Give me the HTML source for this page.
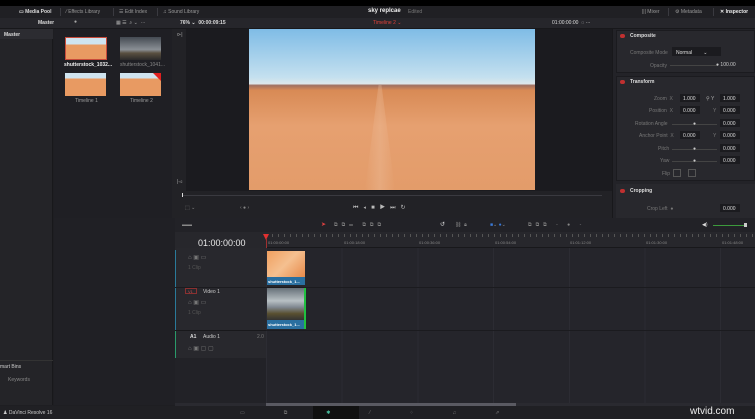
<!DOCTYPE html>
<html><head><style>
*{margin:0;padding:0;box-sizing:border-box}
body{width:755px;height:419px;overflow:hidden;background:#1e1e22;font-family:"Liberation Sans",sans-serif;color:#c8c8cc;position:relative;font-size:5px}
.a{position:absolute}
.t{position:absolute;white-space:nowrap}
.sep{position:absolute;width:1px;background:#3a3a40}
</style></head><body>
<div class="a" style="left:0;top:0;width:755px;height:6px;background:#000"></div>
<div class="a" style="left:0;top:6px;width:755px;height:12px;background:#202024"></div>
<div class="t" style="left:19px;top:9px;color:#ddd;font-weight:bold">▭ Media Pool</div>
<div class="sep" style="left:60px;top:8px;height:8px"></div>
<div class="t" style="left:66px;top:9px;color:#999">⁄ Effects Library</div>
<div class="sep" style="left:113px;top:8px;height:8px"></div>
<div class="t" style="left:119px;top:9px;color:#999">☰ Edit Index</div>
<div class="sep" style="left:157px;top:8px;height:8px"></div>
<div class="t" style="left:163px;top:9px;color:#999">♫ Sound Library</div>
<div class="t" style="left:368px;top:8px;color:#eee;font-weight:bold;font-size:6px">sky replcae</div>
<div class="t" style="left:408px;top:9px;color:#777">Edited</div>
<div class="t" style="left:642px;top:9px;color:#999">||| Mixer</div>
<div class="sep" style="left:668px;top:8px;height:8px"></div>
<div class="t" style="left:675px;top:9px;color:#999">⚙ Metadata</div>
<div class="sep" style="left:713px;top:8px;height:8px"></div>
<div class="t" style="left:720px;top:9px;color:#eee;font-weight:bold">✕ Inspector</div>
<div class="a" style="left:0;top:18px;width:755px;height:11px;background:#26262b;border-bottom:1px solid #18181b"></div>
<div class="t" style="left:38px;top:20px;color:#ddd;font-weight:bold">Master</div>
<div class="t" style="left:74px;top:19px;color:#aaa">●</div>
<div class="t" style="left:116px;top:20px;color:#aaa">▦ ☰ &nbsp;⌕ ⌄ &nbsp;···</div>
<div class="t" style="left:180px;top:20px;color:#ddd;font-weight:bold">76% ⌄ &nbsp;00:00:09:15</div>
<div class="t" style="left:373px;top:20px;color:#e0403a">Timeline 2 ⌄</div>
<div class="t" style="left:552px;top:20px;color:#ddd">01:00:00:00 &nbsp;◌ ···</div>
<div class="a" style="left:0;top:29px;width:53px;height:376px;background:#242428;border-right:1px solid #18181b"></div>
<div class="a" style="left:0;top:29px;width:53px;height:10px;background:#2c2c31"></div>
<div class="t" style="left:4px;top:32px;color:#ddd;font-weight:bold">Master</div>
<div class="a" style="left:0;top:360px;width:53px;height:1px;background:#333"></div>
<div class="t" style="left:0;top:364px;color:#ccc">mart Bins</div>
<div class="t" style="left:8px;top:377px;color:#888">Keywords</div>
<div class="a" style="left:54px;top:29px;width:118px;height:189px;background:#1f1f24"></div>
<div class="a" style="left:54px;top:218px;width:121px;height:187px;background:#202025"></div>
<div class="a" style="left:65px;top:37px;width:42px;height:23px;background:linear-gradient(#cfe4f0 0 30%,#e89a62 30%);border:1px solid #c84a3a"></div>
<div class="t" style="left:64px;top:62px;color:#eee;font-weight:bold">shutterstock_1032...</div>
<div class="a" style="left:120px;top:37px;width:41px;height:23px;background:linear-gradient(#444a52,#8a8f95 55%,#5a5040 70%,#2a2a2a)"></div>
<div class="t" style="left:120px;top:62px;color:#888">shutterstock_1041...</div>
<div class="a" style="left:65px;top:73px;width:41px;height:23px;background:linear-gradient(#cfe4f0 0 25%,#e89a62 25%)"></div>
<div class="t" style="left:75px;top:98px;color:#999">Timeline 1</div>
<div class="a" style="left:120px;top:73px;width:41px;height:23px;background:linear-gradient(#cfe4f0 0 25%,#e89a62 25%)"></div>
<div class="a" style="left:153px;top:73px;width:0;height:0;border-left:8px solid transparent;border-top:8px solid #e02020"></div>
<div class="t" style="left:130px;top:98px;color:#999">Timeline 2</div>
<div class="a" style="left:172px;top:29px;width:440px;height:189px;background:#1b1b1f"></div>
<div class="a" style="left:172px;top:29px;width:14px;height:162px;background:#222226"></div>
<div class="t" style="left:177px;top:32px;color:#aaa">⊳|</div>
<div class="t" style="left:177px;top:179px;color:#aaa">|◅</div>
<div class="a" style="left:249px;top:29px;width:286px;height:161px;background:linear-gradient(#7fbce6 0%,#c4e0ef 30%,#dde7ea 34%,#a07060 35%,#d88a55 38%,#e6a070 60%,#e39c6a 100%)"></div>
<div class="a" style="left:365px;top:85px;width:30px;height:105px;background:linear-gradient(90deg,transparent,rgba(240,200,170,.3),transparent);clip-path:polygon(45% 0,55% 0,100% 100%,0 100%)"></div>
<div class="a" style="left:172px;top:191px;width:440px;height:27px;background:#222226"></div>
<div class="a" style="left:182px;top:195px;width:420px;height:1px;background:#3a3a40"></div>
<div class="a" style="left:182px;top:193px;width:1px;height:4px;background:#ddd"></div>
<div class="t" style="left:185px;top:205px;color:#888">⬚ ⌄</div>
<div class="t" style="left:240px;top:205px;color:#888">‹ ● ›</div>
<div class="t" style="left:353px;top:204px;color:#bbb;font-size:6px;letter-spacing:5px">⏮◂■▶⏭↻</div>
<div class="a" style="left:612px;top:29px;width:143px;height:189px;background:#232328;border-left:1px solid #18181b"></div>
<div class="a" style="left:616px;top:30px;width:139px;height:43px;background:#28282d;border:1px solid #1b1b1f"></div>
<div class="a" style="left:616px;top:76px;width:139px;height:105px;background:#28282d;border:1px solid #1b1b1f"></div>
<div class="a" style="left:616px;top:184px;width:139px;height:34px;background:#28282d"></div>
<div class="a" style="left:620px;top:34px;width:5px;height:4px;border-radius:2px;background:#c03030"></div>
<div class="t" style="left:630px;top:33px;color:#ddd;font-weight:bold">Composite</div>
<div class="t" style="left:630px;top:50px;color:#777">Composite Mode</div>
<div class="a" style="left:672px;top:47px;width:49px;height:9px;background:#1b1b1f"></div>
<div class="t" style="left:676px;top:50px;color:#ddd">Normal &nbsp;&nbsp;&nbsp;&nbsp;&nbsp;&nbsp;&nbsp;⌄</div>
<div class="t" style="left:650px;top:63px;color:#777">Opacity</div>
<div class="a" style="left:670px;top:65px;width:48px;height:1px;background:#444"></div>
<div class="t" style="left:716px;top:62px;color:#ccc">● 100.00</div>
<div class="a" style="left:620px;top:80px;width:5px;height:4px;border-radius:2px;background:#c03030"></div>
<div class="t" style="left:630px;top:79px;color:#ddd;font-weight:bold">Transform</div>
<div class="t" style="left:654px;top:96px;color:#777">Zoom &nbsp;X</div>
<div class="a" style="left:680px;top:94px;width:20px;height:8px;background:#1b1b1f"></div><div class="t" style="left:683px;top:96px;color:#ddd">1.000</div>
<div class="t" style="left:706px;top:96px;color:#aaa">⚲ Y</div>
<div class="a" style="left:720px;top:94px;width:20px;height:8px;background:#1b1b1f"></div><div class="t" style="left:723px;top:96px;color:#ddd">1.000</div>
<div class="t" style="left:649px;top:108px;color:#777">Position &nbsp;X</div>
<div class="a" style="left:680px;top:106px;width:20px;height:8px;background:#1b1b1f"></div><div class="t" style="left:683px;top:108px;color:#ddd">0.000</div>
<div class="t" style="left:713px;top:108px;color:#777">Y</div>
<div class="a" style="left:720px;top:106px;width:20px;height:8px;background:#1b1b1f"></div><div class="t" style="left:723px;top:108px;color:#ddd">0.000</div>
<div class="t" style="left:635px;top:121px;color:#777">Rotation Angle</div>
<div class="a" style="left:672px;top:124px;width:45px;height:1px;background:#444"></div><div class="t" style="left:693px;top:121px;color:#ccc">●</div>
<div class="a" style="left:720px;top:119px;width:20px;height:8px;background:#1b1b1f"></div><div class="t" style="left:723px;top:121px;color:#ddd">0.000</div>
<div class="t" style="left:639px;top:133px;color:#777">Anchor Point &nbsp;X</div>
<div class="a" style="left:680px;top:131px;width:20px;height:8px;background:#1b1b1f"></div><div class="t" style="left:683px;top:133px;color:#ddd">0.000</div>
<div class="t" style="left:713px;top:133px;color:#777">Y</div>
<div class="a" style="left:720px;top:131px;width:20px;height:8px;background:#1b1b1f"></div><div class="t" style="left:723px;top:133px;color:#ddd">0.000</div>
<div class="t" style="left:658px;top:146px;color:#777">Pitch</div>
<div class="a" style="left:672px;top:149px;width:45px;height:1px;background:#444"></div><div class="t" style="left:693px;top:146px;color:#ccc">●</div>
<div class="a" style="left:720px;top:144px;width:20px;height:8px;background:#1b1b1f"></div><div class="t" style="left:723px;top:146px;color:#ddd">0.000</div>
<div class="t" style="left:660px;top:158px;color:#777">Yaw</div>
<div class="a" style="left:672px;top:161px;width:45px;height:1px;background:#444"></div><div class="t" style="left:693px;top:158px;color:#ccc">●</div>
<div class="a" style="left:720px;top:156px;width:20px;height:8px;background:#1b1b1f"></div><div class="t" style="left:723px;top:158px;color:#ddd">0.000</div>
<div class="t" style="left:662px;top:171px;color:#777">Flip</div>
<div class="a" style="left:673px;top:169px;width:8px;height:8px;border:1px solid #555"></div>
<div class="a" style="left:688px;top:169px;width:8px;height:8px;border:1px solid #555"></div>
<div class="a" style="left:620px;top:189px;width:5px;height:4px;border-radius:2px;background:#c03030"></div>
<div class="t" style="left:630px;top:188px;color:#ddd;font-weight:bold">Cropping</div>
<div class="t" style="left:647px;top:206px;color:#777">Crop Left &nbsp;●</div>
<div class="a" style="left:720px;top:204px;width:20px;height:8px;background:#1b1b1f"></div><div class="t" style="left:723px;top:206px;color:#ddd">0.000</div>
<div class="a" style="left:175px;top:218px;width:580px;height:14px;background:#222227"></div>
<div class="t" style="left:182px;top:222px;color:#888">▬▬</div>
<div class="t" style="left:321px;top:221px;color:#e04040;font-size:6px">➤</div>
<div class="t" style="left:334px;top:222px;color:#888;letter-spacing:4px">⧉⧉▭ ⧉⧉⧉</div>
<div class="t" style="left:440px;top:221px;color:#ddd;font-size:6px">↺</div>
<div class="t" style="left:455px;top:222px;color:#888">⛓ &nbsp;🔒︎</div>
<div class="t" style="left:490px;top:222px;color:#3a7ad8">■<span style="color:#888">⌄</span> ●<span style="color:#888">⌄</span></div>
<div class="t" style="left:528px;top:222px;color:#888;letter-spacing:4px">⧉⧉⧉ - ● -</div>
<div class="t" style="left:702px;top:222px;color:#ddd">◀)</div>
<div class="a" style="left:713px;top:225px;width:32px;height:1px;background:#3c9a3c"></div>
<div class="a" style="left:744px;top:223px;width:3px;height:4px;background:#ccc"></div>
<div class="a" style="left:175px;top:232px;width:91px;height:16px;background:#27272c"></div>
<div class="t" style="left:198px;top:238px;color:#e8e8e8;font-size:9px">01:00:00:00</div>
<div class="a" style="left:266px;top:232px;width:489px;height:16px;background:#27272c;border-bottom:1px solid #18181b"></div>
<div class="a" style="left:266px;top:234px;width:489px;height:3px;background:repeating-linear-gradient(90deg,#555 0 1px,transparent 1px 6px)"></div>
<div class="t" style="left:268px;top:240px;color:#888;font-size:4px">01:00:00:00</div>
<div class="t" style="left:344px;top:240px;color:#888;font-size:4px">01:00:18:00</div>
<div class="t" style="left:419px;top:240px;color:#888;font-size:4px">01:00:36:00</div>
<div class="t" style="left:495px;top:240px;color:#888;font-size:4px">01:00:54:00</div>
<div class="t" style="left:570px;top:240px;color:#888;font-size:4px">01:01:12:00</div>
<div class="t" style="left:646px;top:240px;color:#888;font-size:4px">01:01:30:00</div>
<div class="t" style="left:722px;top:240px;color:#888;font-size:4px">01:01:48:00</div>
<div class="a" style="left:263px;top:234px;width:6px;height:6px;background:#e03030;clip-path:polygon(0 0,100% 0,50% 100%)"></div>
<div class="a" style="left:266px;top:238px;width:1px;height:167px;background:#a03030"></div>
<div class="a" style="left:175px;top:248px;width:91px;height:157px;background:#222227"></div>
<div class="a" style="left:175px;top:248px;width:91px;height:82px;background:#28282d"></div>
<div class="a" style="left:175px;top:330px;width:91px;height:28px;background:#28282d;border-top:1px solid #18181b"></div>
<div class="a" style="left:175px;top:250px;width:1px;height:80px;background:#2a7a9a"></div>
<div class="a" style="left:175px;top:331px;width:1px;height:27px;background:#2a9a6a"></div>
<div class="a" style="left:175px;top:287px;width:91px;height:1px;background:#1b1b1f"></div>
<div class="t" style="left:188px;top:254px;color:#777;font-size:6px">⌂ ▣ ▭</div>
<div class="t" style="left:188px;top:265px;color:#555">1 Clip</div>
<div class="a" style="left:185px;top:288px;width:12px;height:6px;border:1px solid #8a3030"></div>
<div class="t" style="left:188px;top:289px;color:#c05050;font-size:4px">V1</div>
<div class="t" style="left:203px;top:289px;color:#ccc">Video 1</div>
<div class="t" style="left:188px;top:299px;color:#777;font-size:6px">⌂ ▣ ▭</div>
<div class="t" style="left:188px;top:310px;color:#555">1 Clip</div>
<div class="t" style="left:190px;top:334px;color:#ddd;font-weight:bold">A1</div>
<div class="t" style="left:203px;top:334px;color:#ccc">Audio 1</div>
<div class="t" style="left:257px;top:334px;color:#777">2.0</div>
<div class="t" style="left:188px;top:345px;color:#777;font-size:6px">⌂ ▣ ▢ ▢</div>
<div class="a" style="left:266px;top:248px;width:489px;height:157px;background:#25252b"></div>
<div class="a" style="left:266px;top:248px;width:489px;height:157px;background:repeating-linear-gradient(90deg,#2c2c33 0 1px,transparent 1px 75.7px)"></div>
<div class="a" style="left:266px;top:287px;width:489px;height:1px;background:#1b1b1f"></div>
<div class="a" style="left:266px;top:330px;width:489px;height:1px;background:#1b1b1f"></div>
<div class="a" style="left:267px;top:251px;width:38px;height:26px;background:linear-gradient(135deg,#f0a060,#f5c090,#e88a4a)"></div>
<div class="a" style="left:267px;top:277px;width:38px;height:8px;background:#2a6fa0"></div>
<div class="t" style="left:268px;top:279px;color:#fff;font-size:4px;font-weight:bold">shutterstock_1...</div>
<div class="a" style="left:267px;top:288px;width:38px;height:32px;background:linear-gradient(#667078,#b8c0c4 40%,#808890 60%,#5a5030 80%,#333)"></div>
<div class="a" style="left:267px;top:320px;width:38px;height:9px;background:#2a6fa0"></div>
<div class="t" style="left:268px;top:322px;color:#fff;font-size:4px;font-weight:bold">shutterstock_1...</div>
<div class="a" style="left:304px;top:288px;width:2px;height:41px;background:#20c040"></div>
<div class="a" style="left:175px;top:403px;width:580px;height:3px;background:#2a2a30"></div>
<div class="a" style="left:266px;top:403px;width:250px;height:3px;background:#5a5a62"></div>
<div class="a" style="left:0;top:406px;width:755px;height:13px;background:#202024"></div>
<div class="t" style="left:3px;top:410px;color:#ccc">♟ DaVinci Resolve 16</div>
<div class="a" style="left:313px;top:406px;width:46px;height:13px;background:#111"></div>
<div class="t" style="left:240px;top:410px;color:#777;letter-spacing:39px">▭⧉<span style="color:#4ac0a0">✱</span>⁄⁘♫⇗</div>
<div class="t" style="left:690px;top:406px;color:#eee;font-size:10px">wtvid.com</div>
</body></html>
